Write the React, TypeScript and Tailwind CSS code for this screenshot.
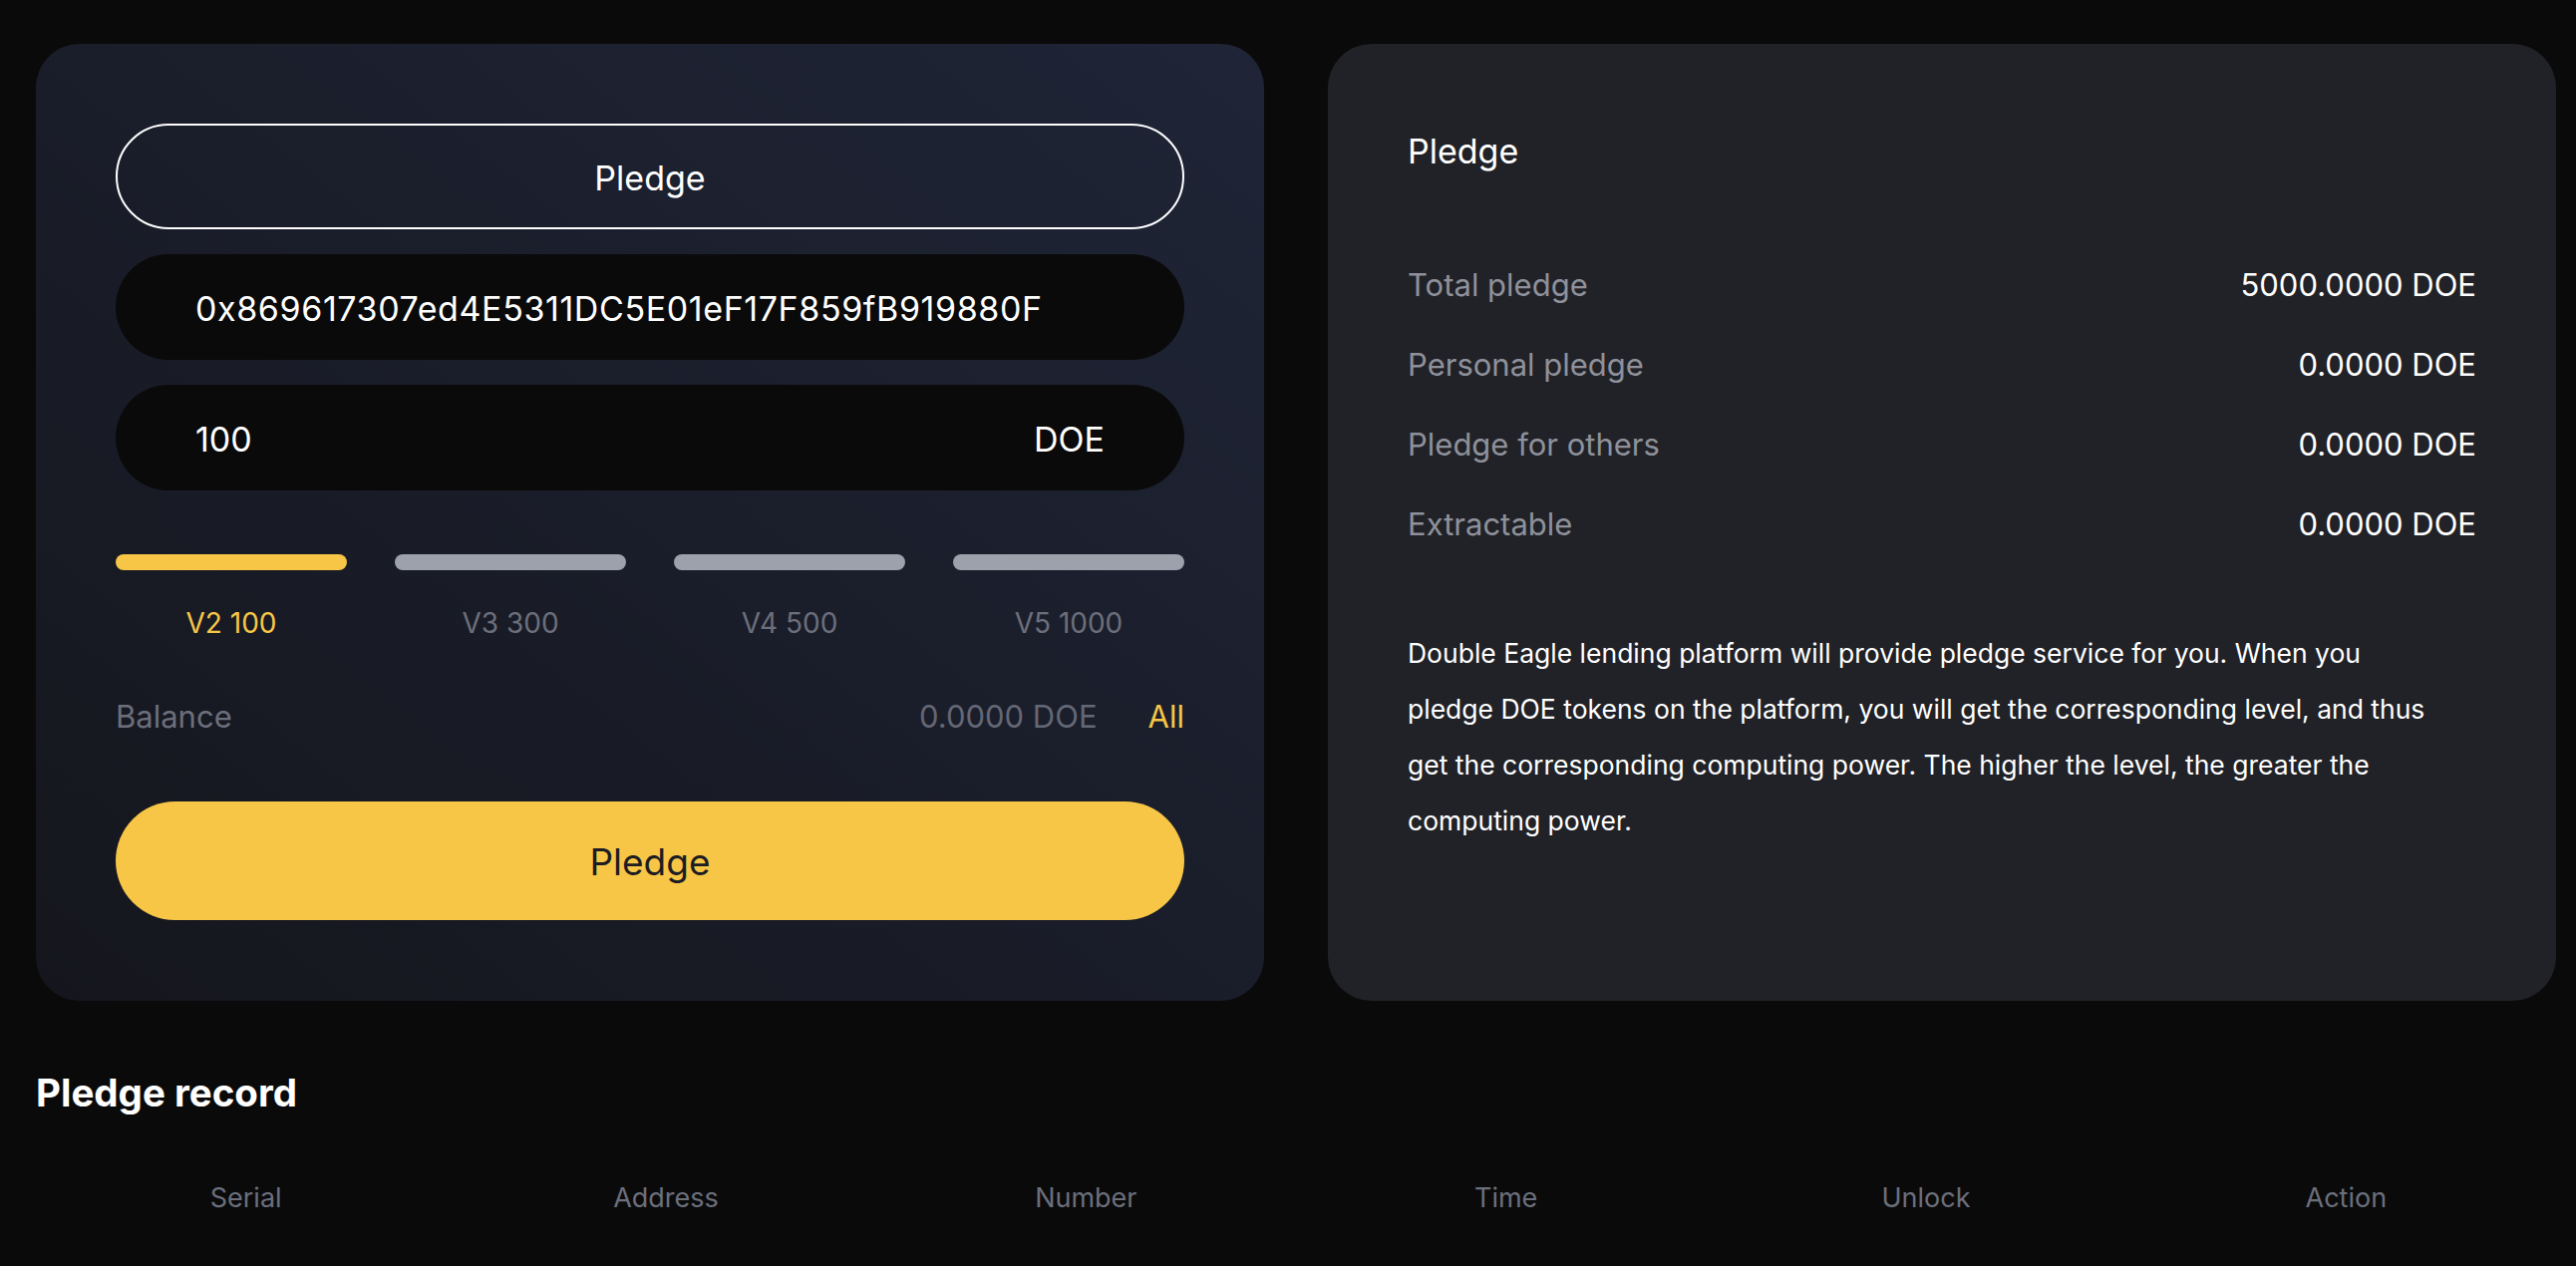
import React from 'react';

const levels = [
  { label: 'V2 100', active: true },
  { label: 'V3 300', active: false },
  { label: 'V4 500', active: false },
  { label: 'V5 1000', active: false },
];

const stats = [
  { label: 'Total pledge', value: '5000.0000 DOE' },
  { label: 'Personal pledge', value: '0.0000 DOE' },
  { label: 'Pledge for others', value: '0.0000 DOE' },
  { label: 'Extractable', value: '0.0000 DOE' },
];

const columns = ['Serial', 'Address', 'Number', 'Time', 'Unlock', 'Action'];

function PledgeForm() {
  return (
    <div className="rounded-[44px] bg-gradient-to-tr from-[#15161d] to-[#1f2537] px-[80px] pt-[80px] pb-[81px]">
      <button className="flex h-[106px] w-full items-center justify-center rounded-full border-2 border-white pt-[2px] text-[34px] text-white">
        Pledge
      </button>
      <div className="mt-[25px] flex h-[106px] items-center rounded-full bg-[#0a0a0a] px-[80px] pt-[2px] text-[34px] tracking-[0.6px] text-white">
        0x869617307ed4E5311DC5E01eF17F859fB919880F
      </div>
      <div className="mt-[25px] flex h-[106px] items-center justify-between rounded-full bg-[#0a0a0a] px-[80px] pt-[2px] text-[34px] text-white">
        <span>100</span>
        <span>DOE</span>
      </div>

      <div className="mt-[64px] grid grid-cols-4 gap-[48px]">
        {levels.map((lv) => (
          <div key={lv.label} className="flex flex-col items-center">
            <div className={`h-4 w-full rounded-full ${lv.active ? 'bg-[#f7c646]' : 'bg-[#9da1ab]'}`}></div>
            <span className={`mt-[32px] text-[28px] leading-[42px] ${lv.active ? 'text-[#f7c646]' : 'text-[#6c6f7b]'}`}>
              {lv.label}
            </span>
          </div>
        ))}
      </div>

      <div className="mt-[49px] flex items-center justify-between text-[31px] leading-[48px]">
        <span className="text-[#6c6f7b]">Balance</span>
        <div className="flex items-center gap-[51px]">
          <span className="text-[#646774]">0.0000 DOE</span>
          <span className="text-[#f7c646]">All</span>
        </div>
      </div>

      <button className="mt-[61px] flex h-[119px] w-full items-center justify-center rounded-full bg-[#f7c646] pt-[2px] text-[37px] text-[#1c1d22]">
        Pledge
      </button>
    </div>
  );
}

function PledgeInfo() {
  return (
    <div className="rounded-[44px] bg-[#212227] px-[80px] pt-[82px] pb-[80px]">
      <h3 className="text-[34px] leading-[51px] text-white">Pledge</h3>
      <div className="mt-[85px] flex flex-col gap-[32px]">
        {stats.map((s) => (
          <div key={s.label} className="flex items-center justify-between text-[31px] leading-[48px]">
            <span className="text-[#8e919b]">{s.label}</span>
            <span className="text-white">{s.value}</span>
          </div>
        ))}
      </div>
      <p className="mt-[77px] text-[26.5px] leading-[56px] text-white">
        Double Eagle lending platform will provide pledge service for you. When you
        <br />
        pledge DOE tokens on the platform, you will get the corresponding level, and thus
        <br />
        get the corresponding computing power. The higher the level, the greater the
        <br />
        computing power.
      </p>
    </div>
  );
}

export default function App() {
  return (
    <div className="min-h-screen bg-[#0a0a0a] pl-[36px] pr-[20px] pt-[44px] font-['Inter','Noto_Sans',sans-serif]">
      <div className="grid grid-cols-2 gap-[64px]">
        <PledgeForm />
        <PledgeInfo />
      </div>

      <h2 className="mt-[64px] text-[38.5px] font-bold leading-[57px] text-white">Pledge record</h2>
      <div className="mt-[56px] grid grid-cols-6">
        {columns.map((c) => (
          <div key={c} className="text-center text-[27px] leading-[42px] text-[#6b6f7c]">
            {c}
          </div>
        ))}
      </div>
    </div>
  );
}
